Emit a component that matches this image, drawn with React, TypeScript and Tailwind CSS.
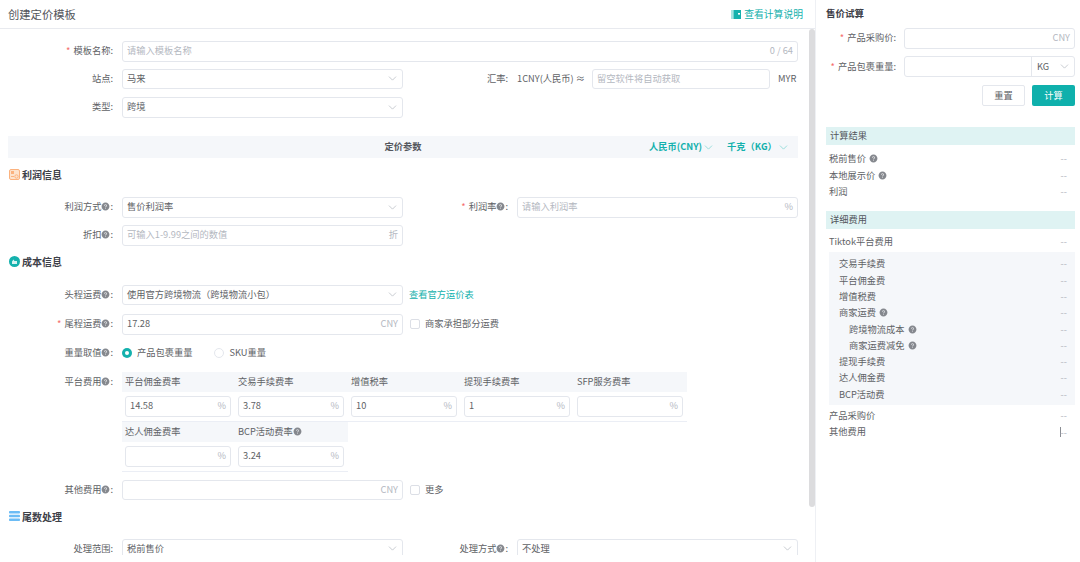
import { AiFillQuestionCircle } from "react-icons/ai";
import { ChevronDown } from "lucide-react";
import type { ReactNode } from "react";

const Help = ({ className = "" }: { className?: string }) => (
  <AiFillQuestionCircle className={`inline-block size-[9px] text-[#85888e] align-[-1px] ${className}`} />
);

const Chevron = ({ className = "text-[#b8bcc4]" }: { className?: string }) => (
  <ChevronDown size={13} strokeWidth={1.4} className={`shrink-0 ${className}`} />
);

function Label({ text, required, help, width = "w-[105px]" }: { text: string; required?: boolean; help?: boolean; width?: string }) {
  return (
    <div className={`${width} shrink-0 text-right whitespace-nowrap text-[#606266]`}>
      {required && <span className="mr-[3px] text-[#f56c6c]">*</span>}
      {text}
      {help && <Help />}:
    </div>
  );
}

function TextBox({
  value,
  placeholder,
  suffix,
  className = "flex-1",
}: {
  value?: string;
  placeholder?: string;
  suffix?: string;
  className?: string;
}) {
  return (
    <div className={`flex h-[20.5px] items-center rounded-[3px] border border-[#e4e7ed] bg-white pl-[4px] pr-[4px] ${className}`}>
      <input
        readOnly
        value={value ?? ""}
        placeholder={placeholder}
        className="w-full min-w-0 flex-1 bg-transparent text-[#606266] outline-none placeholder:text-[#b4b8bf]"
      />
      {suffix && <span className="shrink-0 text-[#b4b8bf]">{suffix}</span>}
    </div>
  );
}

function Select({ value, className = "w-[281px]" }: { value: string; className?: string }) {
  return (
    <div className={`flex h-[20.5px] items-center justify-between rounded-[3px] border border-[#e4e7ed] bg-white pl-[4px] pr-[3px] text-[#606266] ${className}`}>
      <span>{value}</span>
      <Chevron />
    </div>
  );
}

function Section({ icon, title, className }: { icon: ReactNode; title: string; className: string }) {
  return (
    <div className={`flex h-[14px] items-center pl-[9px] ${className}`}>
      <div className="flex w-[13px] shrink-0 items-center">{icon}</div>
      <span className="text-[10px] font-bold text-[#3d4048]">{title}</span>
    </div>
  );
}

function FeeCell({ title, value, help }: { title: string; value?: string; help?: boolean }) {
  return (
    <div className="w-[113px]">
      <div className="flex h-[20.5px] items-center bg-[#f5f7fa] pl-[3px] text-[#606266]">
        {title}
        {help && <Help />}
      </div>
      <div className="pb-[4px] pl-[3px] pr-[4px] pt-[4px]">
        <TextBox value={value} suffix="%" className="w-full" />
      </div>
    </div>
  );
}

function Checkbox({ text }: { text: string }) {
  return (
    <div className="-ml-[2px] flex items-center text-[#606266]">
      <span className="mr-[5px] size-[10px] rounded-[2px] border border-[#dcdfe6] bg-white" />
      {text}
    </div>
  );
}

function ResultRow({ text, help, indent = "" }: { text: string; help?: boolean; indent?: string }) {
  return (
    <div className={`flex h-[16.3px] items-center justify-between pr-[8px] text-[#606266] ${indent}`}>
      <span>
        {text}
        {help && <Help className="ml-[3px]" />}
      </span>
      <span className="text-[#b4b8bf]">--</span>
    </div>
  );
}

export default function App() {
  return (
    <div className="flex h-[562px] w-[1080px] overflow-hidden bg-white font-['Noto_Sans_CJK_SC','Noto_Sans',sans-serif] text-[9.25px]">
      <div className="relative w-[815px] shrink-0">
        <div className="flex h-[29px] items-center justify-between border-b border-[#e8eaef] pl-[8px] pr-[12px]">
          <span className="text-[11.3px] text-[#53565c]">创建定价模板</span>
          <div className="flex items-center gap-[3px] text-[9.8px] text-[#14b1ad]">
            <svg width="10" height="9" viewBox="0 0 10 9">
              <rect x="0" y="0" width="2.5" height="9" fill="#a5e3e1" />
              <rect x="2.5" y="0" width="7.5" height="9" fill="#14b1ad" />
              <rect x="7" y="3" width="2" height="1.6" fill="#ffffff" />
            </svg>
            查看计算说明
          </div>
        </div>

        {/* 滚动条 */}
        <div className="absolute left-[809px] top-[29px] h-[478px] w-[6px] rounded-[3px] bg-[#dcdcde]" />

        <div className="h-[526px] overflow-hidden pr-[17px]">
          <div className="mt-[12px] flex items-center gap-[9px] pl-[8px]">
            <Label text="模板名称" required />
            <TextBox placeholder="请输入模板名称" suffix="0 / 64" />
          </div>
          <div className="mt-[7px] flex items-center gap-[9px] pl-[8px]">
            <Label text="站点" />
            <Select value="马来" />
            <Label text="汇率" width="w-[96px]" />
            <span className="whitespace-nowrap text-[#606266]">1CNY(人民币) ≈</span>
            <TextBox placeholder="留空软件将自动获取" className="-ml-[2px] w-[178px]" />
            <span className="-ml-[1px] text-[#606266]">MYR</span>
          </div>
          <div className="mt-[8px] flex items-center gap-[9px] pl-[8px]">
            <Label text="类型" />
            <Select value="跨境" />
          </div>

          <div className="relative ml-[8px] mt-[18.5px] flex h-[22px] items-center justify-center bg-[#f5f7fa] text-[#53565c]">
            <span className="font-bold">定价参数</span>
            <div className="absolute left-[641px] top-[3px] flex h-[16px] items-center font-bold text-[#14b1ad]">
              人民币(CNY)
              <Chevron className="text-[#7fd6d3]" />
              <span className="ml-[12px]">千克（KG）</span>
              <Chevron className="text-[#7fd6d3]" />
            </div>
          </div>

          <Section
            className="mt-[9px]"
            title="利润信息"
            icon={
              <svg width="11" height="11" viewBox="0 0 11 11">
                <rect x="0.5" y="0.5" width="10" height="10" rx="1.5" fill="#fde3cd" stroke="#fbb27e" />
                <rect x="2" y="2" width="3" height="3" fill="#fbb27e" />
                <circle cx="7.5" cy="7.5" r="1.7" fill="none" stroke="#fbb27e" />
                <rect x="2" y="7" width="3" height="1" fill="#fbb27e" />
              </svg>
            }
          />

          <div className="mt-[16px] flex items-center gap-[9px] pl-[8px]">
            <Label text="利润方式" help />
            <Select value="售价利润率" />
            <Label text="利润率" help required width="w-[96px]" />
            <TextBox placeholder="请输入利润率" suffix="%" />
          </div>
          <div className="mt-[7.5px] flex items-center gap-[9px] pl-[8px]">
            <Label text="折扣" help />
            <TextBox placeholder="可输入1-9.99之间的数值" suffix="折" className="w-[281px]" />
          </div>

          <Section
            className="mt-[9px]"
            title="成本信息"
            icon={
              <svg width="11" height="11" viewBox="0 0 11 11">
                <circle cx="5.5" cy="5.5" r="5.5" fill="#14b1ad" />
                <path d="M3 8V5.5l1.5-2 1 1.5H8v3z" fill="#d5f2f1" />
              </svg>
            }
          />

          <div className="mt-[16px] flex items-center gap-[9px] pl-[8px]">
            <Label text="头程运费" help />
            <Select value="使用官方跨境物流（跨境物流小包）" />
            <span className="-ml-[3px] text-[#14b1ad]">查看官方运价表</span>
          </div>
          <div className="mt-[9px] flex items-center gap-[9px] pl-[8px]">
            <Label text="尾程运费" help required />
            <TextBox value="17.28" suffix="CNY" className="w-[281px]" />
            <Checkbox text="商家承担部分运费" />
          </div>
          <div className="mt-[8.5px] flex h-[19px] items-center gap-[9px] pl-[8px]">
            <Label text="重量取值" help />
            <div className="flex items-center text-[#606266]">
              <span className="mr-[5px] flex size-[10px] items-center justify-center rounded-full bg-[#14b1ad]">
                <span className="size-[4px] rounded-full bg-white" />
              </span>
              产品包裹重量
              <span className="ml-[21px] mr-[6px] size-[10px] rounded-full border border-[#e4e7ed]" />
              SKU重量
            </div>
          </div>

          <div className="mt-[9.5px] flex gap-[9px] pl-[8px]">
            <div className="flex h-[21px] items-center">
              <Label text="平台费用" help />
            </div>
            <div>
              <div className="flex w-[565px] border-b border-[#ebeef5]">
                <FeeCell title="平台佣金费率" value="14.58" />
                <FeeCell title="交易手续费率" value="3.78" />
                <FeeCell title="增值税率" value="10" />
                <FeeCell title="提现手续费率" value="1" />
                <FeeCell title="SFP服务费率" />
              </div>
              <div className="flex w-[226px] border-b border-[#ebeef5]">
                <FeeCell title="达人佣金费率" />
                <FeeCell title="BCP活动费率" value="3.24" help />
              </div>
            </div>
          </div>

          <div className="mt-[8px] flex items-center gap-[9px] pl-[8px]">
            <Label text="其他费用" help />
            <TextBox suffix="CNY" className="w-[281px]" />
            <Checkbox text="更多" />
          </div>

          <Section
            className="mt-[9px]"
            title="尾数处理"
            icon={
              <svg width="11" height="10" viewBox="0 0 11 10">
                <rect y="0" width="11" height="2.6" rx="0.8" fill="#6cbcf5" />
                <rect y="3.7" width="11" height="2.6" rx="0.8" fill="#6cbcf5" />
                <rect y="7.4" width="11" height="2.6" rx="0.8" fill="#6cbcf5" />
              </svg>
            }
          />

          <div className="mt-[15.5px] flex items-center gap-[9px] pl-[8px]">
            <Label text="处理范围" />
            <Select value="税前售价" />
            <Label text="处理方式" help width="w-[96px]" />
            <Select value="不处理" className="flex-1" />
          </div>
        </div>
      </div>

      <div className="flex-1 border-l border-[#eef0f4] pl-[10px] pr-[5px]">
        <div className="flex h-[27px] items-center text-[9.5px] font-bold text-[#3d4048]">售价试算</div>
        <div className="mt-[1px] flex items-center gap-[8px]">
          <Label text="产品采购价" required width="w-[70px]" />
          <TextBox suffix="CNY" />
        </div>
        <div className="mt-[7.5px] flex items-center gap-[8px]">
          <Label text="产品包裹重量" required width="w-[70px]" />
          <div className="flex h-[21px] flex-1 items-center rounded-[3px] border border-[#e4e7ed]">
            <div className="flex-1" />
            <div className="flex h-full w-[43px] items-center justify-between border-l border-[#e4e7ed] pl-[5px] pr-[3px] text-[#606266]">
              KG
              <Chevron />
            </div>
          </div>
        </div>
        <div className="mt-[8px] flex justify-end gap-[7px]">
          <button className="h-[21px] w-[43px] rounded-[2px] border border-[#e4e7ed] text-[#606266]">重置</button>
          <button className="h-[21px] w-[43px] rounded-[2px] bg-[#0fb0ac] text-white">计算</button>
        </div>

        <div className="mt-[21px] flex h-[18px] items-center bg-[#dff3f3] pl-[4px] text-[#53565c]">计算结果</div>
        <div className="mt-[6px] pl-[3px]">
          <ResultRow text="税前售价" help />
          <ResultRow text="本地展示价" help />
          <ResultRow text="利润" />
        </div>

        <div className="mt-[11px] flex h-[18px] items-center bg-[#dff3f3] pl-[4px] text-[#53565c]">详细费用</div>
        <div className="mt-[5px] pl-[3px]">
          <ResultRow text="Tiktok平台费用" />
        </div>
        <div className="ml-[3px] mt-[2px] bg-[#f5f7fa] pb-[2px] pt-[4px]">
          <ResultRow text="交易手续费" indent="pl-[10px]" />
          <ResultRow text="平台佣金费" indent="pl-[10px]" />
          <ResultRow text="增值税费" indent="pl-[10px]" />
          <ResultRow text="商家运费" help indent="pl-[10px]" />
          <ResultRow text="跨境物流成本" help indent="pl-[20px]" />
          <ResultRow text="商家运费减免" help indent="pl-[20px]" />
          <ResultRow text="提现手续费" indent="pl-[10px]" />
          <ResultRow text="达人佣金费" indent="pl-[10px]" />
          <ResultRow text="BCP活动费" indent="pl-[10px]" />
        </div>
        <div className="mt-[3px] pl-[3px]">
          <ResultRow text="产品采购价" />
          <div className="flex h-[16.3px] items-center justify-between pr-[8px] text-[#606266]">
            <span>其他费用</span>
            <span className="border-l border-[#8a8d93] leading-[10px] text-[#b4b8bf]">--</span>
          </div>
        </div>
      </div>
    </div>
  );
}
